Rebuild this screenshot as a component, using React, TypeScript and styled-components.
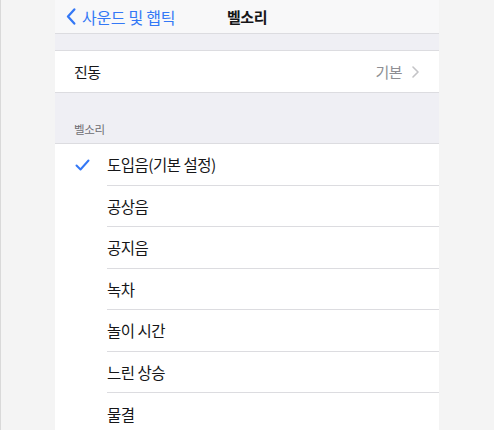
import React from 'react';
import styled, { createGlobalStyle } from 'styled-components';

const blue = '#3478f6';
const grayText = '#8e8e93';
const groupBg = '#efeff4';
const line = '#dcdce0';

const GlobalStyle = createGlobalStyle`
  html, body {
    margin: 0;
    padding: 0;
    background: #f4f4f4;
  }
  body {
    font-family: "Noto Sans CJK KR", "Noto Sans", sans-serif;
    color: #161618;
  }
`;

const Page = styled.div`
  display: flex;
  justify-content: center;
  align-items: flex-start;
  height: 430px;
  overflow: hidden;
  border-left: 1px solid #d9d9d9;
  box-sizing: border-box;
`;

const Panel = styled.div`
  width: 384px;
  flex-shrink: 0;
  margin-left: -1px;
  background: ${groupBg};
`;

const NavBar = styled.div`
  height: 33px;
  background: #f8f8f9;
  border-bottom: 1px solid ${line};
  display: grid;
  grid-template-columns: 1fr auto 1fr;
  align-items: center;
`;

const BackButton = styled.div`
  display: flex;
  align-items: center;
  gap: 6px;
  padding-left: 11px;
  color: ${blue};
  font-size: 16px;
  letter-spacing: -0.3px;
`;

const Title = styled.div`
  font-size: 15px;
  font-weight: 600;
  letter-spacing: -0.5px;
`;

const Spacer = styled.div<{ $h: number }>`
  height: ${(p) => p.$h}px;
`;

const Group = styled.div`
  background: #fff;
  border-top: 1px solid ${line};
  border-bottom: 1px solid ${line};
`;

const Row = styled.div<{ $h?: number }>`
  height: ${(p) => p.$h ?? 41}px;
  display: flex;
  align-items: center;
  padding: 0 20px 0 19px;
  font-size: 15px;
  letter-spacing: -0.5px;
`;

const Label = styled.div`
  flex: 1;
`;

const Value = styled.div`
  color: ${grayText};
  display: flex;
  align-items: center;
  gap: 10px;
`;

const SectionHeader = styled.div`
  height: 50px;
  display: flex;
  align-items: flex-end;
  padding: 0 0 6px 19px;
  box-sizing: border-box;
  color: #6d6d72;
  font-size: 11.5px;
  letter-spacing: -0.3px;
`;

const ToneList = styled.div`
  background: #fff;
  border-top: 1px solid ${line};
`;

const ToneRow = styled.div`
  height: 41.5px;
  display: flex;
  align-items: center;
`;

const CheckCell = styled.div`
  width: 52px;
  display: flex;
  justify-content: center;
  padding-left: 2px;
  box-sizing: border-box;
`;

const ToneLabel = styled.div<{ $last?: boolean }>`
  flex: 1;
  height: 100%;
  display: flex;
  align-items: center;
  font-size: 15.5px;
  letter-spacing: -0.5px;
  border-bottom: ${(p) => (p.$last ? 'none' : `1px solid ${line}`)};
  box-sizing: border-box;
`;

const Chevron = ({ color, w, h, sw }: { color: string; w: number; h: number; sw: number }) => (
  <svg width={w} height={h} viewBox="0 0 10 18" fill="none">
    <path d="M8.5 1.5 L1.8 9 L8.5 16.5" stroke={color} strokeWidth={sw} strokeLinecap="round" strokeLinejoin="round" />
  </svg>
);

const RightChevron = () => (
  <svg width="7" height="12" viewBox="0 0 7 12" fill="none">
    <path d="M1 1 L6 6 L1 11" stroke="#c4c4c7" strokeWidth="1.6" strokeLinecap="round" strokeLinejoin="round" />
  </svg>
);

const Check = () => (
  <svg width="15" height="12" viewBox="0 0 15 12" fill="none">
    <path d="M1.5 6.5 L5.5 10.5 L13.5 1.5" stroke={blue} strokeWidth="2" strokeLinecap="round" strokeLinejoin="round" />
  </svg>
);

const tones = ['도입음(기본 설정)', '공상음', '공지음', '녹차', '놀이 시간', '느린 상승', '물결'];

const App: React.FC = () => {
  return (
    <>
      <GlobalStyle />
      <Page>
        <Panel>
          <NavBar>
            <BackButton>
              <Chevron color={blue} w={10} h={17} sw={2.4} />
              사운드 및 햅틱
            </BackButton>
            <Title>벨소리</Title>
            <div />
          </NavBar>
          <Spacer $h={16} />
          <Group>
            <Row>
              <Label>진동</Label>
              <Value>
                기본
                <RightChevron />
              </Value>
            </Row>
          </Group>
          <SectionHeader>벨소리</SectionHeader>
          <ToneList>
            {tones.map((t, i) => (
              <ToneRow key={t}>
                <CheckCell>{i === 0 && <Check />}</CheckCell>
                <ToneLabel $last={i === tones.length - 1}>{t}</ToneLabel>
              </ToneRow>
            ))}
          </ToneList>
        </Panel>
      </Page>
    </>
  );
};

export default App;
